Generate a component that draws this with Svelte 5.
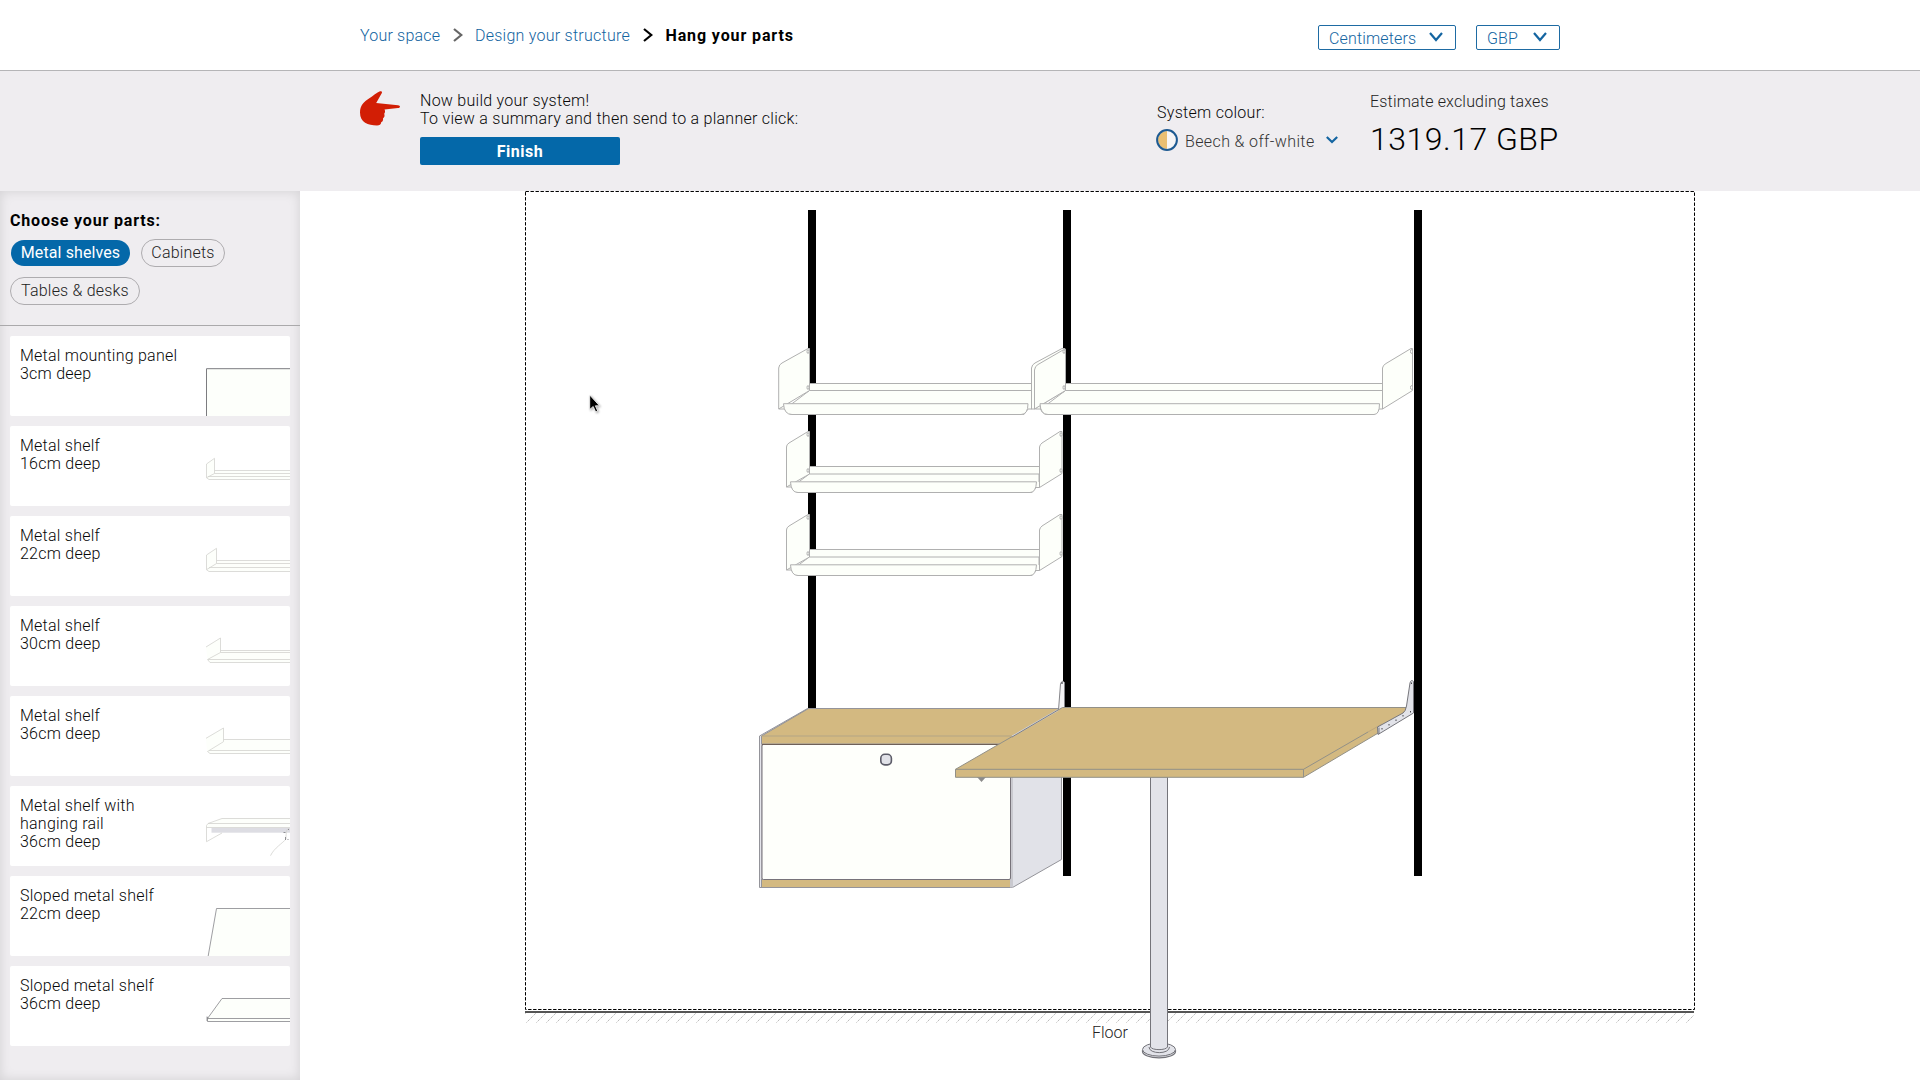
<script>
  const categories = [
    { name: 'Metal shelves', width: 121, active: true },
    { name: 'Cabinets', width: 84, active: false },
    { name: 'Tables & desks', width: 130, active: false }
  ];

  // Outline strokes for each thumbnail, in an 84 x 80 box
  const parts = [
    { lines: ['Metal mounting panel', '3cm deep'], tone: 'dark', fill: 'M.5 81V32.7H85V81z', paths: ['M.5 81V32.7H85'] },
    { lines: ['Metal shelf', '16cm deep'], tone: 'light', fill: 'M.5 38L8.5 32.3V44.5H85V53.5H3L.5 51.7z', paths: ['M.5 51.7V38L8.5 32.3V47.5L.5 51.7L3 53.5H85', 'M8.5 44.5H85M8.5 47.5H85M2 50.5H85'] },
    { lines: ['Metal shelf', '22cm deep'], tone: 'light', fill: 'M.5 39L10.5 32.3V44.5H85V55.5H3L.5 53.7z', paths: ['M.5 53.7V39L10.5 32.3V47.5L.5 53.7L3 55.5H85', 'M10.5 44.5H85M10.5 47.5H85M3 51.5H85'] },
    { lines: ['Metal shelf', '30cm deep'], tone: 'light', fill: 'M0 41L14.5 32V44.5H85V56.5H4L1.5 53.7z', paths: ['M0 41L14.5 32V46.5L1.5 53.5L4 56.5H85', 'M14.5 44.5H85M14.5 46.5H85M2 53.5H85'] },
    { lines: ['Metal shelf', '36cm deep'], tone: 'light', fill: 'M0 42.3L17.5 32V43.5H85V57.5H4L1 55.7z', paths: ['M0 42.3L17.5 32V45.7L1.5 55.5L4 57.5H85', 'M17.5 43.5H85M3 54.5H85'] },
    { lines: ['Metal shelf with', 'hanging rail', '36cm deep'], tone: 'light', rail: true, fill: 'M.5 39L16 32.5H85V41.5H.5z', paths: ['M.5 55.7V39.5L2 37.5L16 32.5H85', 'M2 37.5H85M.5 41.5H85M.5 55.7L16 47'] },
    { lines: ['Sloped metal shelf', '22cm deep'], tone: 'mid', fill: 'M2 81L10.5 32.5H85V81z', paths: ['M2 81L10.5 32.5H85'] },
    { lines: ['Sloped metal shelf', '36cm deep'], tone: 'mid', fill: 'M1 52.5L16 32.5H85V55.5H1z', paths: ['M85 52.5H1.5L16 32.5H85', 'M1.5 51V55.5H85M1 50.5V55'] }
  ];

  const smallShelves = [0, 83];
</script>

<div class="app">
  <header>
    <div class="wrap">
      <nav>
        <a class="your" href="#space">Your space</a>
        <svg class="sep grey" width="10" height="14" viewBox="0 0 10 14"><path d="M1 1L8.3 7L1 13" /></svg>
        <a class="design" href="#structure">Design your structure</a>
        <svg class="sep" width="10" height="14" viewBox="0 0 10 14"><path d="M1 1L8.3 7L1 13" /></svg>
        <strong>Hang your parts</strong>
      </nav>
      <div class="selects">
        <button class="select units">Centimeters <svg width="14" height="10" viewBox="0 0 14 10"><path d="M1 1L7 8L13 1" /></svg></button>
        <button class="select money">GBP <svg width="14" height="10" viewBox="0 0 14 10"><path d="M1 1L7 8L13 1" /></svg></button>
      </div>
    </div>
  </header>

  <section class="banner">
    <div class="wrap">
      <svg class="hand" width="40" height="36" viewBox="0 0 40 36">
        <path d="M20 .3C21.500-.2 22.500 1 21.700 2.300L16.200 12L38 14.200C40.700 14.600 40.600 16.800 38 17L24.500 18.600C25.500 20.500 25 21.800 24.200 22.800C25 25 24.200 26.500 23 27.200C23.400 29.500 22.500 30.600 21.200 31.200C21 33.500 19.500 34.500 17 34.500C8 34.300 0 31.500 0 21.500C0 14.500 4 10.800 9 7.500C13 4.800 17 1.700 20 .3z" />
      </svg>
      <div class="message">
        <p>Now build your system!<br />To view a summary and then send to a planner click:</p>
        <button class="finish">Finish</button>
      </div>
      <div class="colour">
        <span>System colour:</span>
        <div class="swatch-row">
          <svg width="22" height="22" viewBox="0 0 22 22">
            <circle cx="11" cy="11" r="9.800" fill="#f6f5f5" />
            <path d="M11 2A9 9 0 0 0 11 20z" fill="#e9bf72" />
            <circle cx="11" cy="11" r="9.900" fill="none" stroke="#1d5a91" stroke-width="2" />
          </svg>
          <span class="name">Beech &amp; off-white</span>
          <svg class="chev" width="12" height="8" viewBox="0 0 12 8"><path d="M.8 1L6 6L11.200 1" /></svg>
        </div>
      </div>
      <div class="estimate">
        <span>Estimate excluding taxes</span>
        <div class="price">1319.17 GBP</div>
      </div>
    </div>
  </section>

  <div class="body">
    <aside>
      <div class="chooser">
        <h2>Choose your parts:</h2>
        <div class="pills">
          {#each categories as c}
            <button class="pill" class:active={c.active} style:width="{c.width}px">{c.name}</button>
          {/each}
        </div>
      </div>
      <ul>
        {#each parts as part}
          <li>
            <div class="label">{#each part.lines as line}<div>{line}</div>{/each}</div>
            <svg class="thumb {part.tone}" width="84" height="80" viewBox="0 0 84 80">
              <path class="face" d={part.fill} />
              {#if part.rail}<rect x="5.500" y="42" width="80" height="4.700" fill="#dddde3" />{/if}
              {#each part.paths as d}<path d={d} />{/each}
              {#if part.rail}
                <path d="M64.500 69.700C68 62 77 57 80 53V50C80.500 46 80 43 83 42.500" />
                <path d="M79.500 51v3M82.500 43v1M77.500 46.500h2M82 53v1" stroke="#77777c" />
              {/if}
            </svg>
          </li>
        {/each}
      </ul>
    </aside>

    <main>
      <svg width="1620" height="889" viewBox="300 191 1620 889">
        <defs>
          <pattern id="hatch" width="10" height="11" x="526" y="1013" patternUnits="userSpaceOnUse">
            <path d="M-1 11L10 0M9 11L20 0M-11 11L0 0" stroke="#a4a4a4" stroke-width=".9" stroke-dasharray="1.200 .9" />
          </pattern>
          <g id="screws"><ellipse cx="0" cy="0" rx="1" ry="2" /><ellipse cx="0" cy="36" rx="1" ry="2" /></g>
        </defs>

        <!-- wall and floor -->
        <rect x="525.500" y="191.500" width="1169" height="818" fill="none" stroke="#000" stroke-dasharray="3.400 1.600" />
        <rect x="525" y="1011" width="1169" height="2" fill="#555" />
        <rect x="525" y="1013" width="1169" height="10" fill="url(#hatch)" />
        <text x="1092" y="1038">Floor</text>

        <!-- tracks -->
        <rect x="808" y="210" width="8" height="600" />
        <rect x="1063" y="210" width="8" height="666" />
        <rect x="1414" y="210" width="8" height="666" />

        <!-- 22cm shelves -->
        <g class="metal">
          <path d="M779 409H785L809.500 390.500V383.500H1032V409H1028L1024 414.500H791Q785 413 784 404z" />
          <path d="M809.500 383.500H1031M809.500 390.500H1031" />
          <path d="M778.700 409V368Q779 364.500 782 363L808 348.500H809.500V390.500z" />
          <path d="M783.500 403.700H1028Q1028 414.500 1021 414.500H792Q784 414.500 783.500 403.700z" />
          <path d="M1031.500 409V368Q1032 364.500 1035 363L1062 348.500H1065V390.500L1035 409z" />
          <path d="M1035.500 409H1041L1065.500 390.500V383.500H1382.500V409H1378.500L1374 414.500H1046Q1040 413 1040 404z" />
          <path d="M1065.500 383.500H1382M1065.500 390.500H1382" />
          <path d="M1034.500 409V370Q1035 366 1038 364.500L1063 350L1065.500 349.500V390.500z" />
          <path d="M1040 403.700H1379.500Q1379.500 414.500 1374 414.500H1048Q1040.500 414.500 1040 403.700z" />
          <path d="M1382.500 409V368Q1383 365 1386 363.500L1411 348.500H1412.500V390.500z" />
          <use href="#screws" x="808" y="351.500" />
          <use href="#screws" x="1064" y="351.500" />
          <use href="#screws" x="1411.500" y="351.500" />
        </g>

        <!-- 16cm shelves -->
        {#each smallShelves as dy}
          <g class="metal" transform="translate(0 {dy})">
            <path d="M786.500 487H792L809.500 473.800V466.500H1039.500V487.500H1036L1032 492.500H798Q791 491 791 482z" />
            <path d="M809.500 466.500H1039M809.500 474H1039V482" />
            <path d="M786.500 487V447Q786.500 444.500 789 443L808 431.500H809.500V474z" />
            <path d="M790.500 481.800H1036.500Q1036 492.500 1030 492.500H798Q791 492.500 790.500 481.800z" />
            <path d="M1039.500 487.500V447Q1040 444.500 1042 443L1060 431.500H1062V473.500z" />
            <use href="#screws" x="808" y="434.500" />
            <use href="#screws" x="1061" y="434.500" />
          </g>
        {/each}

        <!-- cabinet -->
        <g stroke="#94949a" stroke-width="1">
          <path d="M1012 777L1012 736L1061.500 709V859.500L1012.500 887.500z" fill="#e1e2e8" />
          <path d="M759.500 736L807.500 708.500H809L762 736.500V887.500H759.500z" fill="#e4e4ea" />
          <path d="M761.500 736L808.500 708.500H1060L1012.500 736V744H761.500z" fill="#d3b981" />
          <path d="M761.500 736H1012" stroke="#b3a585" />
          <rect x="761.500" y="879.500" width="250" height="8" fill="#d3b981" />
          <rect x="1010" y="744" width="3" height="143.500" fill="#c9c9cf" stroke="none" />
          <rect x="762" y="744.500" width="248.500" height="135" rx="1.500" fill="#fefffb" stroke="#77737a" />
          <path d="M762 744.500H1010" stroke="#6e6058" />
        </g>
        <rect x="880.800" y="754.300" width="10.600" height="10.600" rx="4" fill="#e1e2e8" stroke="#5c5c68" stroke-width="1.600" />
        <path d="M977 777H986L981.500 782z" fill="#8b8b8b" />

        <!-- table leg -->
        <g fill="#e2e3e9" stroke="#74747a">
          <path d="M1142.500 1050V1051.500A16.500 6.300 0 0 0 1175.500 1051.500V1050" stroke-width="1.200" />
          <ellipse cx="1159" cy="1049.500" rx="16.500" ry="6.600" />
          <path d="M1149 1047C1149 1054.500 1169.500 1054.500 1169.500 1047" />
          <path d="M1150.500 777V1047C1152 1050.500 1166 1050.500 1167.500 1047V777z" />
        </g>

        <!-- table top and brackets -->
        <path d="M1058.500 710L1060.500 684Q1062 679.500 1064.500 682.500V708L1058 714z" fill="#f4f4f6" stroke="#85858a" />
        <circle cx="1062" cy="683" r="1" fill="#66666c" />
        <g fill="#d3b981" stroke="#929087">
          <path d="M955.500 769.300L1062.500 707.500H1406L1412 713L1303.500 777.300H955.500z" />
          <path d="M955.500 769.300H1303.500V777.300M1303.500 769.300L1368 732" fill="none" />
          <path d="M1368 732L1382 724" fill="none" stroke="#bea77d" />
        </g>
        <path d="M1058 710L1012 736.500" stroke="#dcdce0" stroke-width="1.500" />
        <path d="M1058 710L1012 737" stroke="#66666a" stroke-width=".8" />
        <g fill="#e2e3e9" stroke="#77777d">
          <path d="M1377.500 727L1403 713Q1405.500 711.500 1406.500 706L1410 683Q1411 679 1413.500 681.500V713L1378 734.500z" />
          <path d="M1379 727.500V734" />
        </g>
        <path d="M1382 728v1.500M1389 724v1.500M1396 719.500v1.500M1403 715v1.500M1410.500 711v1.500M1411.500 682.500v1.500" stroke="#44444a" />

        <!-- pointer -->
        <path class="cursor" d="M589.700 395V409.500L593.200 406.500L595.700 412L597.700 411L595.400 405.800H599.500z" />
      </svg>
    </main>
  </div>
</div>

<style>
  :global(body) { background: #fff; }
  .app { width: 1920px; height: 1080px; overflow: hidden; display: flex; flex-direction: column; font: 300 16px/18px Roboto, 'Liberation Sans', sans-serif; letter-spacing: .28px; color: #080808; }
  button { font: inherit; letter-spacing: inherit; color: inherit; background: none; box-sizing: border-box; padding: 0; margin: 0; }
  p, h2, ul { margin: 0; padding: 0; }
  svg { display: block; flex: none; }
  .wrap { width: 1200px; margin: 0 auto; display: flex; }
  header { height: 70px; border-bottom: 1px solid #b5b5b7; background: #fff; flex: none; }
  header .wrap { justify-content: space-between; }
  nav { display: flex; height: 18px; margin-top: 27px; }
  nav a { color: #12649f; text-decoration: none; white-space: nowrap; }
  .your { width: 92.500px; letter-spacing: .2px; }
  .design { width: 154px; margin-left: 12.500px; margin-right: 13.500px; letter-spacing: .25px; }
  nav strong { color: #000; font-weight: 700; letter-spacing: .88px; margin-left: 13px; }
  .sep { margin-top: 1px; fill: none; stroke: #000; stroke-width: 2.200; }
  .grey { stroke: #666; }
  .selects { display: flex; gap: 20px; margin-top: 25px; }
  .select { height: 25px; border: 1px solid #1e6ba3; border-radius: 2px; color: #12649f; letter-spacing: .16px; display: flex; justify-content: space-between; align-items: center; padding: 2px 12px 0 10px; }
  .select svg { margin-top: -3px; fill: none; stroke: #1465a1; stroke-width: 2.200; }
  .units { width: 138px; }
  .money { width: 84px; }
  .banner { height: 120px; background: #efedf0; flex: none; }
  .hand { margin-top: 20px; fill: #d21e05; }
  .message { margin: 21px 0 0 20px; width: 736px; }
  .message p { letter-spacing: .26px; }
  .finish { display: block; width: 200px; height: 28px; margin-top: 9px; padding-top: 1px; border: 0; border-radius: 2px; background: #0468a9; color: #fff; font-weight: 700; letter-spacing: .5px; }
  .colour { width: 214px; margin-top: 32.500px; }
  .colour > span { display: block; padding-left: 1px; }
  .swatch-row { display: flex; align-items: center; margin-top: 7.500px; color: #333; }
  .name { margin-left: 7px; width: 141px; padding-top: 4px; letter-spacing: .38px; }
  .chev { fill: none; stroke: #1465a1; stroke-width: 2.200; }
  .estimate { margin-top: 21.500px; white-space: nowrap; color: #222; letter-spacing: .18px; }
  .price { font-size: 32px; line-height: 36px; letter-spacing: .5px; color: #000; margin-top: 10.500px; }
  .body { display: flex; height: 889px; }
  aside { width: 300px; height: 889px; background: #efedf0; box-shadow: inset 0 0 12px rgba(0, 0, 0, .12); flex: none; }
  .chooser { height: 134px; border-bottom: 1px solid #aaa9ab; padding: 0 10px; }
  h2 { font-size: 16px; line-height: 18px; font-weight: 700; letter-spacing: .82px; color: #000; padding-top: 21px; }
  .pills { display: flex; flex-wrap: wrap; gap: 10px; margin-top: 9px; }
  .pill { height: 28px; border: 1px solid #aeacaf; border-radius: 14px; letter-spacing: .2px; color: #222; white-space: nowrap; text-align: center; }
  .pill.active { background: #0468a9 padding-box; border-color: transparent; color: #fff; font-weight: 400; letter-spacing: .1px; }
  ul { list-style: none; display: flex; flex-direction: column; gap: 10px; padding: 10px; }
  li { display: flex; justify-content: space-between; height: 80px; background: #fff; border-radius: 2px; overflow: hidden; }
  .label { padding: 10.500px 0 0 10px; letter-spacing: .24px; }
  .thumb path { fill: none; }
  .thumb .face { fill: #fdfffb; stroke: none; }
  .light { stroke: #d3d3cf; stroke-width: .8; }
  .light rect { stroke: none; }
  .mid { stroke: #85858a; stroke-width: .8; }
  .dark { stroke: #7c7c80; stroke-width: 1; }
  main { flex: none; width: 1620px; }
  main text { fill: #222; letter-spacing: 0; }
  .metal { fill: #fdfffa; stroke: #b0b0b0; stroke-width: 1; }
  .cursor { fill: #000; stroke: #fff; stroke-width: .8; filter: drop-shadow(1px 1.500px 1px rgba(0, 0, 0, .35)); }
</style>
